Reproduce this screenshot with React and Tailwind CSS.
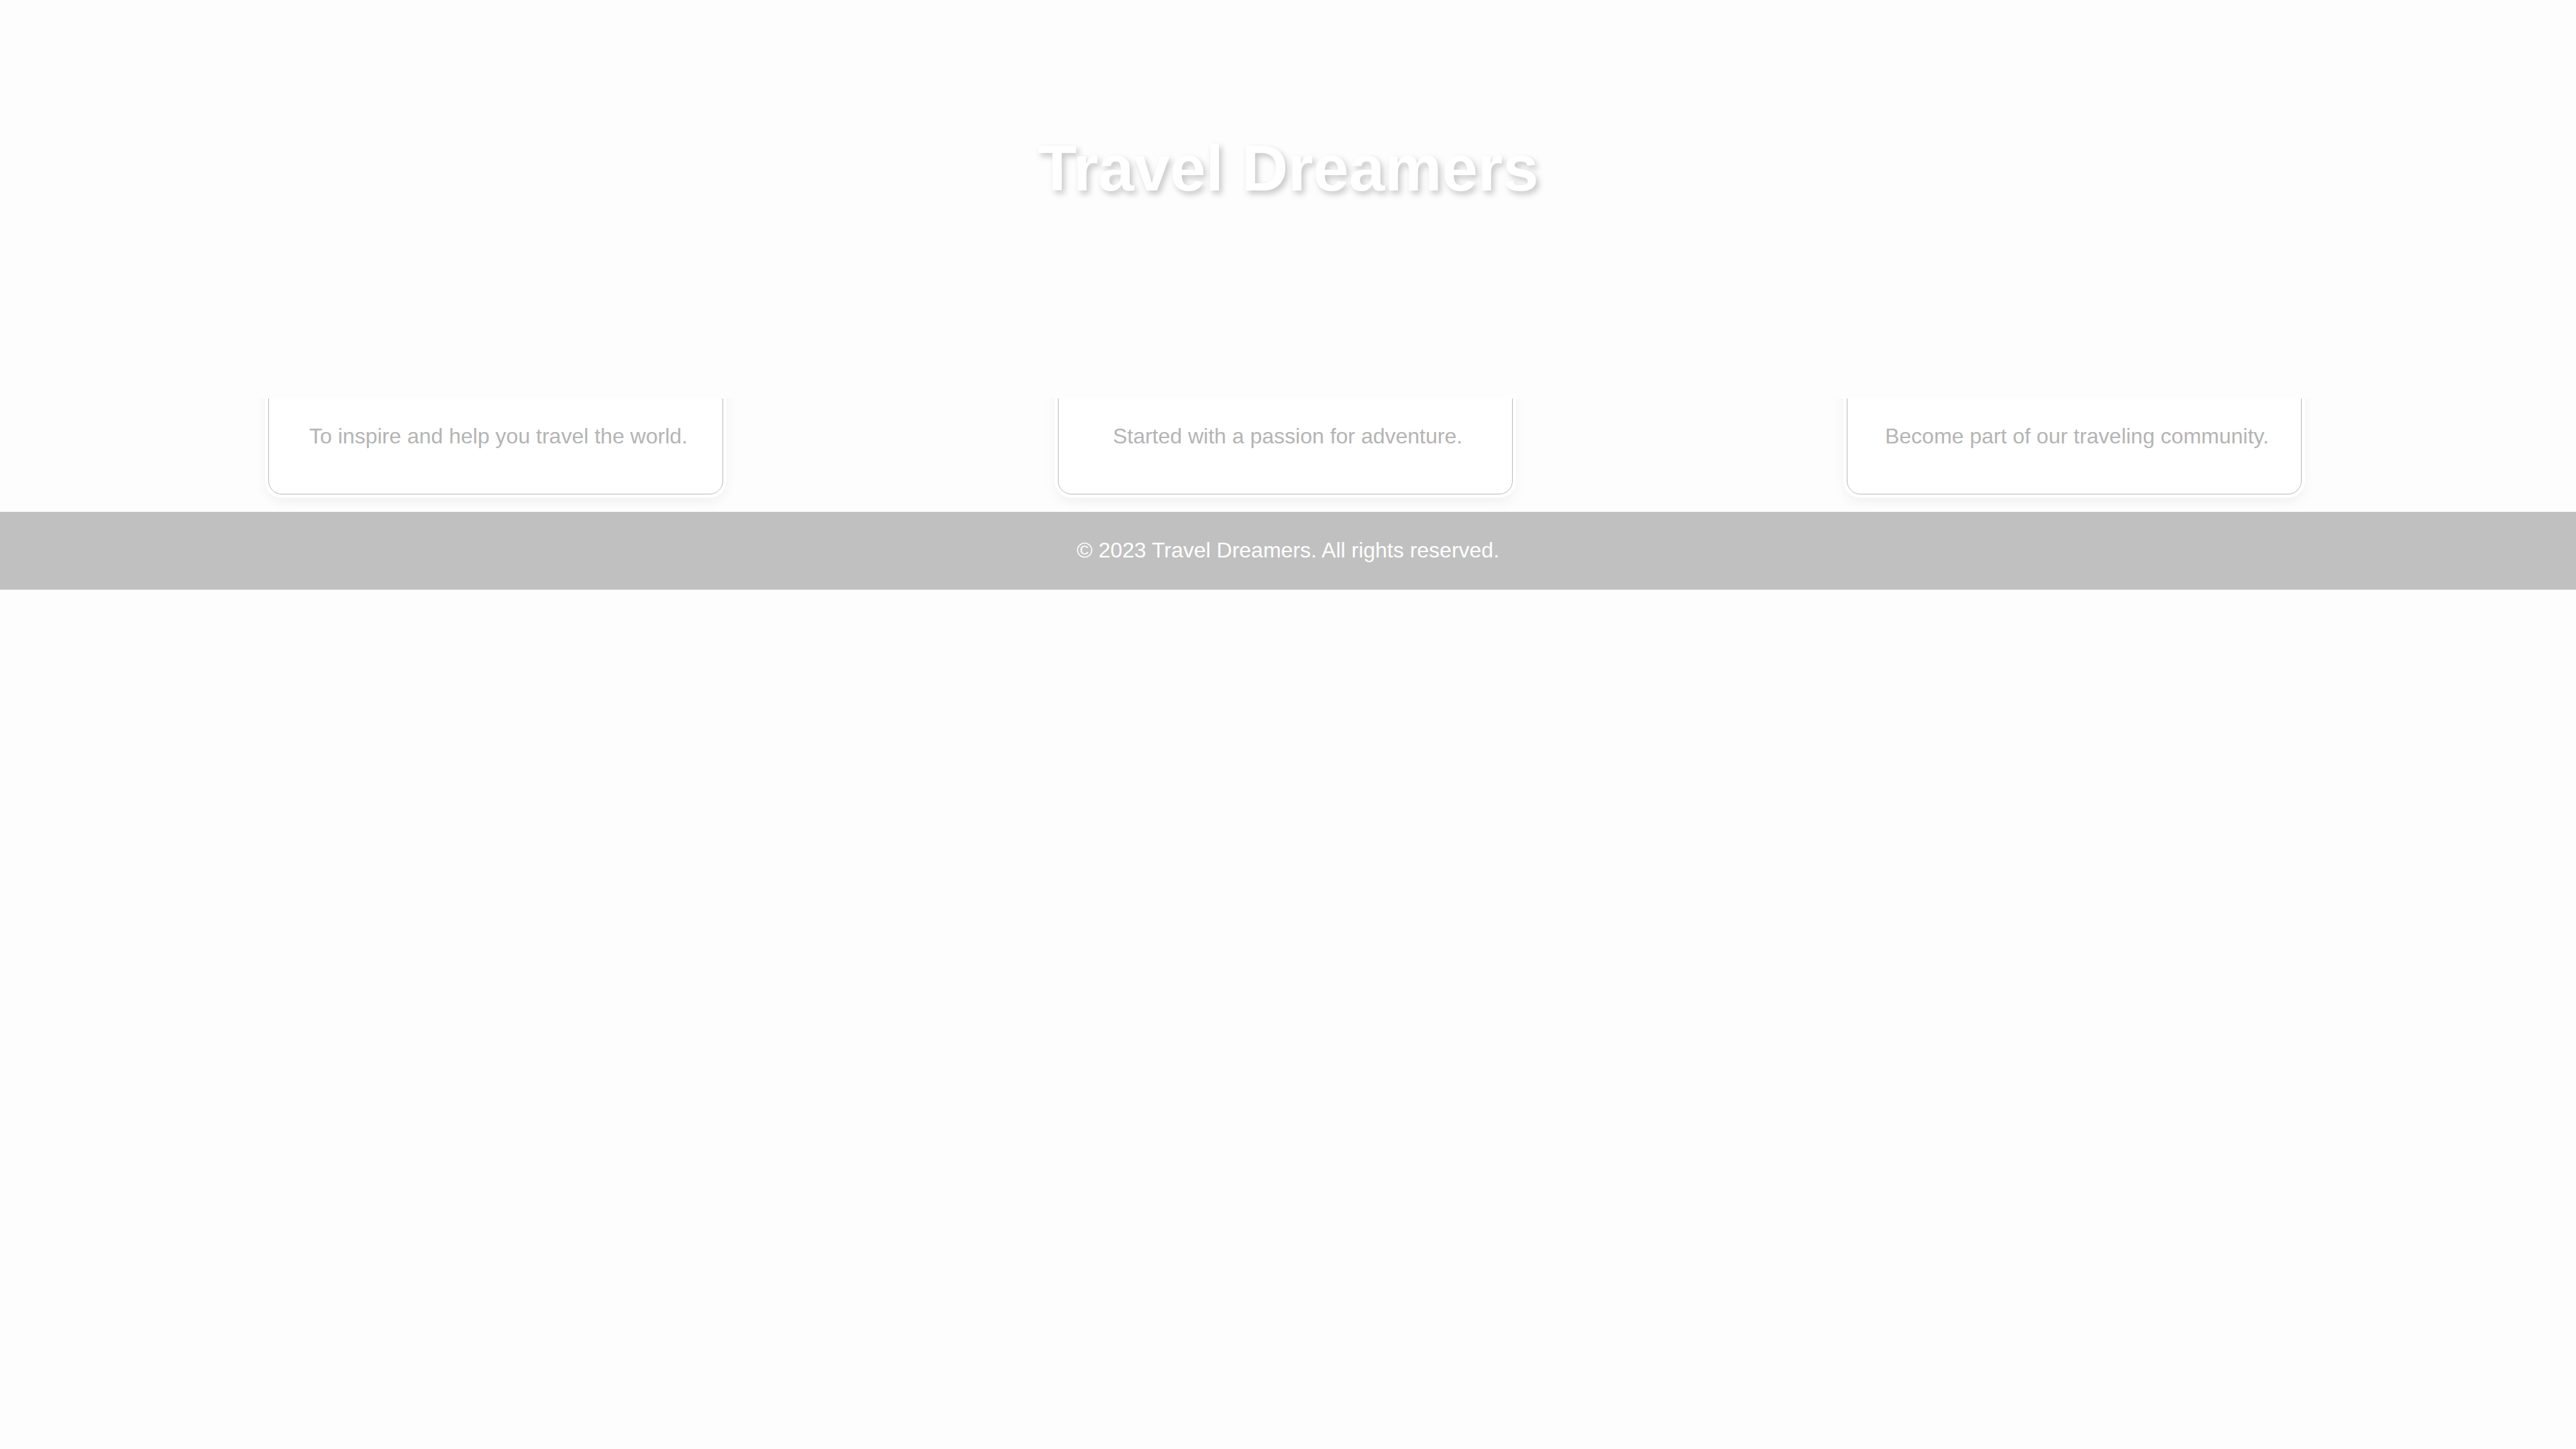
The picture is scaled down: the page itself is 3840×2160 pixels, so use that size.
const cards = [
  'To inspire and help you travel the world.',
  'Started with a passion for adventure.',
  'Become part of our traveling community.',
]

// ── Card ──────────────────────────────────────────────────────────────────────
function Card({ text }) {
  return (
    <div className="w-[678px] bg-white border border-[#b9b9b9] rounded-[20px] shadow-[0_0_0_5px_#ffffff,0_8px_22px_rgba(0,0,0,0.07)] pt-[71px] pb-[62px] pl-[8px] text-center">
      <p className="text-[32px] leading-[48px] text-[#b4b4b4]">{text}</p>
    </div>
  )
}

// ── App ───────────────────────────────────────────────────────────────────────
export default function App() {
  return (
    <div className="min-h-screen bg-[#fdfdfd] font-['Liberation_Sans',Arial,sans-serif]">
      <header className="relative z-10 h-[594px] bg-[#fdfdfd] pt-[196px] text-center">
        <h1 className="text-[96px] leading-[110px] font-bold text-white [text-shadow:4px_5px_10px_rgba(0,0,0,0.22)]">
          Travel Dreamers
        </h1>
      </header>

      <section className="-mt-[40px] pb-[26px]">
        <div className="ml-[400px] flex w-[3031px] justify-between">
          {cards.map((c) => (
            <Card key={c} text={c} />
          ))}
        </div>
      </section>

      <footer className="bg-[#c0c0c0] pt-[33px] pb-[35px] text-center text-[32px] leading-[48px] text-white">
        © 2023 Travel Dreamers. All rights reserved.
      </footer>
    </div>
  )
}
